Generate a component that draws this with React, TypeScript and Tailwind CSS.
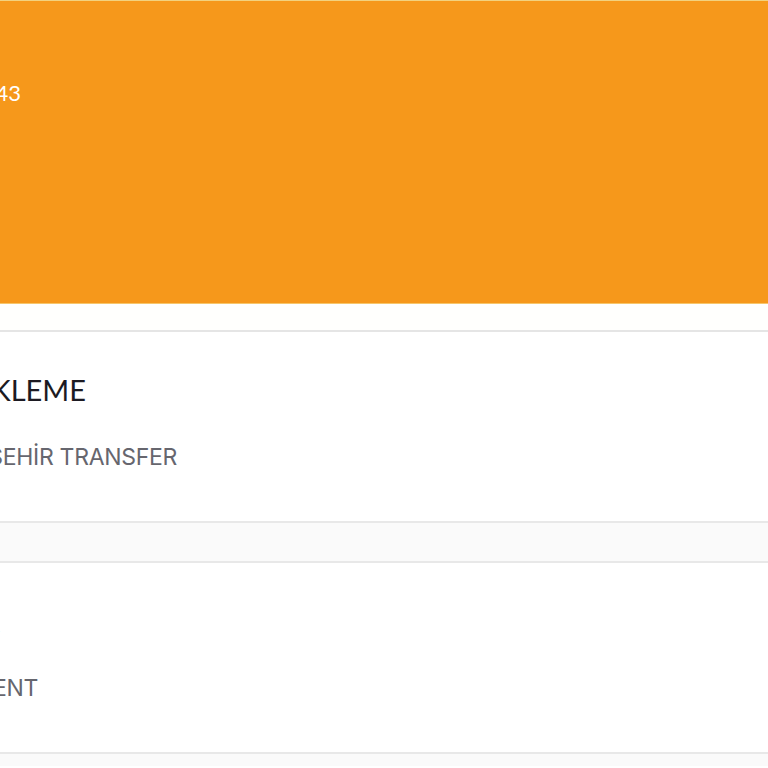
const rows = [
  { title: 'ARAÇ EKLEME', subtitle: 'ŞEHİR TRANSFER', titleEnd: 'w-[86px]', subEnd: 'w-[177px]' },
  { title: 'TUR', subtitle: 'EVENT', titleEnd: 'w-0', subEnd: 'w-[38px]' },
]

export default function App() {
  return (
    <div className="w-[768px] h-[768px] overflow-hidden bg-white font-['Lato','Liberation_Sans',sans-serif]">
      <header className="h-[304px] bg-[#f6981b] border-t border-[#f3d27e] border-b border-b-[#f7c66a]">
        <div className="pt-[80px] flex">
          <div className="w-[21px] flex justify-end whitespace-nowrap text-[22px] leading-6 text-white">
            0532 000 00 43
          </div>
        </div>
      </header>
      <div className="h-[28px] bg-[#fffffd] border-b-2 border-[#e5e5e5]" />
      {rows.map((row, i) => (
        <div key={row.title}>
          {i > 0 && <div className="h-[42px] bg-[#fafafa] border-y-2 border-[#e8e8e8]" />}
          <section className="h-[189px] pt-[40px]">
            <div className={`${row.titleEnd} flex justify-end whitespace-nowrap text-[29px] leading-9 text-[#1c1a22]`}>
              {row.title}
            </div>
            <div className={`${row.subEnd} mt-[35px] flex justify-end whitespace-nowrap font-['Inter',sans-serif] text-[23px] tracking-[-0.3px] leading-7 text-[#66666e]`}>
              {row.subtitle}
            </div>
          </section>
        </div>
      ))}
      <div className="h-[14px] bg-[#fafafa] border-t-2 border-[#e8e8e8]" />
    </div>
  )
}
